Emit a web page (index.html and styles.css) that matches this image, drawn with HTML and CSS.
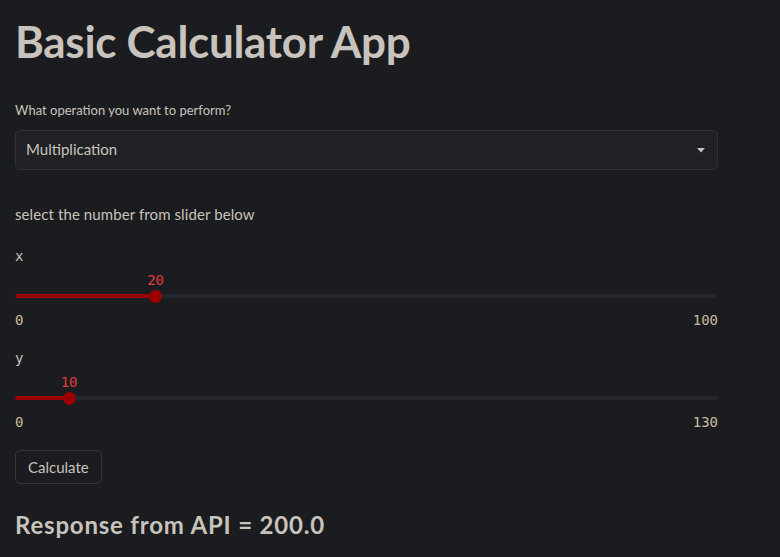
FILE: index.html
```html
<!DOCTYPE html>
<html>
<head>
<meta charset="utf-8">
<link rel="stylesheet" href="styles.css">
</head>
<body>
<main class="app">
  <h1 class="title">Basic Calculator App</h1>

  <div class="field">
    <label class="label">What operation you want to perform?</label>
    <div class="select">
      <span class="select-value">Multiplication</span>
      <svg class="caret" width="8" height="5" viewBox="0 0 8 5"><path d="M0 0 L8 0 L4 4.5 Z" fill="#c8c3bc"/></svg>
    </div>
  </div>

  <p class="text">select the number from slider below</p>

  <div class="slider-block">
    <div class="mono-label">x</div>
    <div class="slider">
      <div class="track">
        <div class="fill" style="width: 20%"></div>
        <div class="thumb" style="left: 20%"><span class="thumb-value">20</span></div>
      </div>
    </div>
    <div class="ticks"><span>0</span><span>100</span></div>
  </div>

  <div class="slider-block">
    <div class="mono-label">y</div>
    <div class="slider">
      <div class="track">
        <div class="fill" style="width: 7.6923%"></div>
        <div class="thumb" style="left: 7.6923%"><span class="thumb-value">10</span></div>
      </div>
    </div>
    <div class="ticks"><span>0</span><span>130</span></div>
  </div>

  <button class="btn">Calculate</button>

  <h3 class="result">Response from API = 200.0</h3>
</main>
</body>
</html>
```

FILE: styles.css
```css
html, body {
  margin: 0;
  padding: 0;
  background: #1b1c1f;
}
body {
  font-family: "Source Sans Pro", "Lato", "Noto Sans", sans-serif;
  color: #c8c3bc;
}
.app {
  width: 703px;
  padding: 0 0 0 15px;
  display: flex;
  flex-direction: column;
  align-items: stretch;
}
.title {
  margin: 13px 0 0 0;
  font-size: 44px;
  font-weight: 700;
  line-height: 56px;
  letter-spacing: -0.3px;
}
.field {
  margin-top: 31px;
  display: flex;
  flex-direction: column;
}
.label {
  font-size: 13px;
  line-height: 20px;
  height: 20px;
}
.select {
  margin-top: 10px;
  height: 38px;
  border: 1px solid #2b3140;
  border-radius: 5px;
  background: #202124;
  display: flex;
  align-items: center;
  justify-content: space-between;
  padding: 0 12px 0 10px;
}
.select-value {
  font-size: 15px;
  position: relative;
  top: -1px;
}
.caret { display: block; }
.text {
  margin: 32px 0 0 0;
  font-size: 15px;
  letter-spacing: 0.1px;
  line-height: 24px;
}
.slider-block {
  display: flex;
  flex-direction: column;
}
.slider-block + .slider-block { margin-top: 22px; }
.text + .slider-block { margin-top: 22px; }
.mono-label {
  font-family: "DejaVu Sans Mono", "Liberation Mono", monospace;
  font-size: 14px;
  line-height: 16px;
  color: #c8c3bc;
}
.slider {
  height: 48px;
  display: flex;
  align-items: flex-end;
}
.track {
  position: relative;
  width: 100%;
  height: 4px;
  border-radius: 2px;
  background: #24272e;
  margin-bottom: 14px;
}
.fill {
  height: 4px;
  border-radius: 2px;
  background: #9d0000;
}
.thumb {
  position: absolute;
  top: 50%;
  width: 13px;
  height: 13px;
  margin: -6.5px 0 0 -6.5px;
  border-radius: 50%;
  background: #9d0000;
}
.thumb-value {
  position: absolute;
  bottom: 15px;
  left: 50%;
  transform: translateX(-50%);
  font-family: "DejaVu Sans Mono", "Liberation Mono", monospace;
  font-size: 14px;
  line-height: 16px;
  color: #e0393e;
}
.ticks {
  display: flex;
  justify-content: space-between;
  font-family: "DejaVu Sans Mono", "Liberation Mono", monospace;
  font-size: 14px;
  line-height: 16px;
  color: #c9b99c;
}
.btn {
  align-self: flex-start;
  margin-top: 20px;
  height: 34px;
  padding: 0 12px;
  background: #1b1c1f;
  border: 1px solid #33363c;
  border-radius: 5px;
  color: #c8c3bc;
  font-family: "Source Sans Pro", "Lato", "Noto Sans", sans-serif;
  font-size: 15px;
}
.result {
  margin: 25px 0 0 0;
  font-size: 24px;
  font-weight: 700;
  letter-spacing: 0.8px;
  line-height: 32px;
}
```
